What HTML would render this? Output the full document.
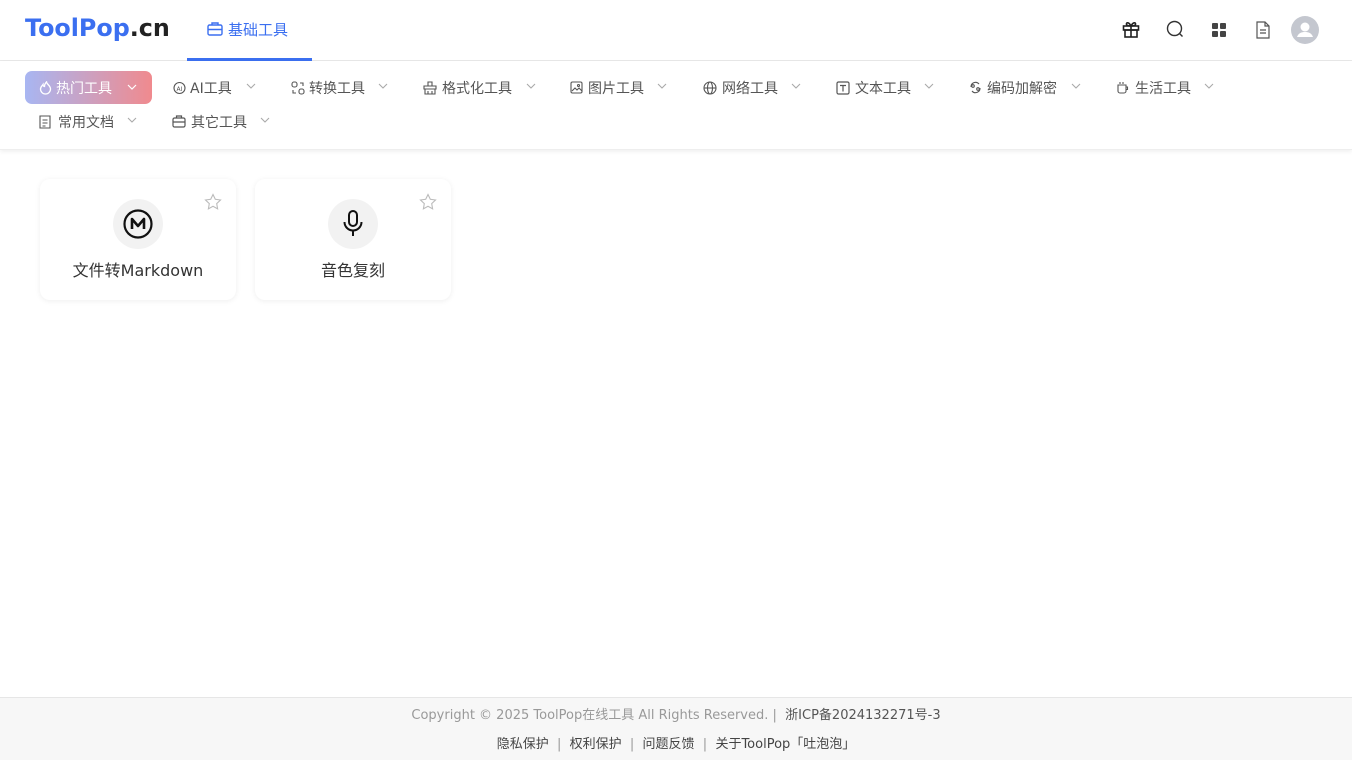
<!DOCTYPE html>
<html><head><meta charset="utf-8">
<style>
*{margin:0;padding:0;box-sizing:border-box}
body{width:1352px;height:760px;background:#fff;font-family:"DejaVu Sans","Liberation Sans","Noto Sans CJK SC",sans-serif;position:relative;overflow:hidden;color:#333}
.hdr{position:absolute;left:0;top:0;width:1352px;height:61px;border-bottom:1px solid #e8e8e8}
.logo{position:absolute;left:25px;top:14px;font-size:23.8px;font-weight:bold;color:#3b6ff0;letter-spacing:0}
.logo span{color:#222}
.tab{position:absolute;left:187px;top:0;width:125px;height:61px;border-bottom:3px solid #3b6ff0;color:#3b6ff0;font-size:15px}
.tab .t{position:absolute;left:41px;top:19px}
.tab svg{position:absolute;left:20px;top:22px}
.ri{position:absolute;top:20px}
.nav{position:absolute;left:0;top:61px;width:1352px;height:89px;box-shadow:0 2px 4px rgba(0,0,0,.06);border-bottom:1px solid #eee}
.it{position:absolute;font-size:14px;color:#555;white-space:nowrap}
.it svg.i{position:absolute;left:0;top:3px}
.it .t{position:absolute;top:0}
.chev{position:absolute;top:5px}
.hot{position:absolute;left:25px;top:10px;width:127px;height:33px;border-radius:7px;background:linear-gradient(90deg,#a8b6f2,#f08a8e);color:#fff;font-size:14px}
.card{position:absolute;top:179px;width:196px;height:121px;border-radius:10px;box-shadow:0 1px 6px rgba(0,0,0,.07);background:#fff}
.circ{position:absolute;left:73px;top:20px;width:50px;height:50px;border-radius:50%;background:#f2f2f2}
.card .nm{position:absolute;top:78px;width:100%;text-align:center;font-size:16px;color:#333}
.star{position:absolute;right:14px;top:14px}
.foot{position:absolute;left:0;top:697px;width:1352px;height:63px;background:#f7f7f7;border-top:1px solid #e6e6e6;font-size:13px;color:#999;text-align:center}
.foot .a{position:absolute;top:6px;width:100%}
.foot .b{position:absolute;top:35px;width:100%;color:#444}
</style></head><body>
<div class="hdr">
 <div class="logo">ToolPop<span>.cn</span></div>
 <div class="tab"><svg width="16" height="14" viewBox="0 0 16 14" fill="none" stroke="#3b6ff0" stroke-width="1.4"><rect x="1" y="3" width="14" height="10" rx="1.5"/><path d="M5 3V1h6v2M1 7.5h14"/></svg><span class="t">基础工具</span></div>
 <svg class="ri" style="left:1122px" width="18" height="18" viewBox="0 0 18 18" fill="none" stroke="#222" stroke-width="1.6"><rect x="1.5" y="6" width="15" height="4"/><rect x="3" y="10" width="12" height="7"/><path d="M9 6v11M9 6C7 2 4 2 4.5 4.5 5 6 9 6 9 6 9 6 13 6 13.5 4.5 14 2 11 2 9 6"/></svg>
 <svg class="ri" style="left:1166px" width="18" height="18" viewBox="0 0 18 18" fill="none" stroke="#333" stroke-width="1.4"><circle cx="8.5" cy="8.5" r="7"/><path d="M13.5 13.5l3 3"/></svg>
 <svg class="ri" style="left:1212px;top:23px" width="14" height="14" viewBox="0 0 14 14" fill="#444"><rect x="0" y="0" width="6" height="6" rx="1"/><rect x="8" y="0" width="6" height="6" rx="1"/><rect x="0" y="8" width="6" height="6" rx="1"/><rect x="8" y="8" width="6" height="6" rx="1"/></svg>
 <svg class="ri" style="left:1255px;top:21px" width="16" height="18" viewBox="0 0 16 18" fill="none" stroke="#555" stroke-width="1.2"><path d="M2 1h8l4 4v12H2z M10 1v4h4 M5 9h6 M5 12h6"/></svg>
 <svg class="ri" style="left:1291px;top:16px" width="28" height="28" viewBox="0 0 28 28"><circle cx="14" cy="14" r="14" fill="#c4c7cf"/><circle cx="14" cy="11" r="4.5" fill="#fff"/><path d="M6 21c1.5-4 4.5-5 8-5s6.5 1 8 5z" fill="#fff"/></svg>
</div>
<div class="nav">
 <div class="hot"><svg style="position:absolute;left:14px;top:10px" width="13" height="14" viewBox="0 0 13 14" fill="none" stroke="#fff" stroke-width="1.3"><path d="M6.5 13a5 5 0 0 1-5-5c0-2 1.5-3 2.5-4.5 0 1.5 1 2 1.5 2C5.5 3.5 6.5 2 7.5 1c0 2 4 3.5 4 7a5 5 0 0 1-5 5z"/></svg><span style="position:absolute;left:31px;top:7px">热门工具</span><svg style="position:absolute;left:102px;top:13px" width="10" height="7" viewBox="0 0 10 7" fill="none" stroke="#fff" stroke-width="1.2"><path d="M1 1l4 4 4-4"/></svg></div>

 <div class="it" style="left:173px;top:17px"><svg class="i" width="13" height="14" viewBox="0 0 13 14" fill="none" stroke="#555" stroke-width="1.1"><circle cx="6.5" cy="7" r="5.5"/><text x="3.5" y="10" font-size="6" fill="#555" stroke="none">AI</text></svg><span class="t" style="left:17px">AI工具</span><svg class="chev" style="left:73px" width="10" height="7" viewBox="0 0 10 7" fill="none" stroke="#aaa" stroke-width="1.1"><path d="M1 1l4 4 4-4"/></svg></div>
 <div class="it" style="left:291px;top:17px"><svg class="i" width="14" height="14" viewBox="0 0 14 14" fill="none" stroke="#555" stroke-width="1.1"><rect x="1" y="1" width="5" height="5" rx="2"/><rect x="8" y="8" width="5" height="5" rx="2"/><path d="M9 2h3v3M5 12H2V9"/></svg><span class="t" style="left:18px">转换工具</span><svg class="chev" style="left:87px" width="10" height="7" viewBox="0 0 10 7" fill="none" stroke="#aaa" stroke-width="1.1"><path d="M1 1l4 4 4-4"/></svg></div>
 <div class="it" style="left:423px;top:17px"><svg class="i" width="14" height="14" viewBox="0 0 14 14" fill="none" stroke="#555" stroke-width="1.1"><path d="M5 1h4v4H5zM1 5h12v3H1zM2 8v5h10V8M5 10v3M9 10v3"/></svg><span class="t" style="left:19px">格式化工具</span><svg class="chev" style="left:103px" width="10" height="7" viewBox="0 0 10 7" fill="none" stroke="#aaa" stroke-width="1.1"><path d="M1 1l4 4 4-4"/></svg></div>
 <div class="it" style="left:570px;top:17px"><svg class="i" width="13" height="13" viewBox="0 0 13 13" fill="none" stroke="#555" stroke-width="1.1"><rect x="1" y="1" width="11" height="11" rx="1.5"/><path d="M2 10l3-3 2 2 2-2 3 3"/><circle cx="8.5" cy="4.5" r="1"/></svg><span class="t" style="left:18px">图片工具</span><svg class="chev" style="left:87px" width="10" height="7" viewBox="0 0 10 7" fill="none" stroke="#aaa" stroke-width="1.1"><path d="M1 1l4 4 4-4"/></svg></div>
 <div class="it" style="left:703px;top:17px"><svg class="i" width="14" height="14" viewBox="0 0 14 14" fill="none" stroke="#555" stroke-width="1.1"><circle cx="7" cy="7" r="6"/><ellipse cx="7" cy="7" rx="2.5" ry="6"/><path d="M1 7h12"/></svg><span class="t" style="left:19px">网络工具</span><svg class="chev" style="left:88px" width="10" height="7" viewBox="0 0 10 7" fill="none" stroke="#aaa" stroke-width="1.1"><path d="M1 1l4 4 4-4"/></svg></div>
 <div class="it" style="left:836px;top:17px"><svg class="i" width="14" height="14" viewBox="0 0 14 14" fill="none" stroke="#555" stroke-width="1.2"><rect x="1" y="1" width="12" height="12" rx="1.5"/><path d="M4 4.5h6M7 4.5v6"/></svg><span class="t" style="left:19px">文本工具</span><svg class="chev" style="left:88px" width="10" height="7" viewBox="0 0 10 7" fill="none" stroke="#aaa" stroke-width="1.1"><path d="M1 1l4 4 4-4"/></svg></div>
 <div class="it" style="left:969px;top:17px"><svg class="i" width="13" height="13" viewBox="0 0 13 13" fill="none" stroke="#555" stroke-width="1.1"><path d="M2 6a4.5 4.5 0 0 1 8-3M11 7a4.5 4.5 0 0 1-8 3"/><circle cx="4" cy="5" r="1.3"/><circle cx="9" cy="8" r="1.3"/></svg><span class="t" style="left:18px">编码加解密</span><svg class="chev" style="left:102px" width="10" height="7" viewBox="0 0 10 7" fill="none" stroke="#aaa" stroke-width="1.1"><path d="M1 1l4 4 4-4"/></svg></div>
 <div class="it" style="left:1116px;top:17px"><svg class="i" width="13" height="13" viewBox="0 0 13 13" fill="none" stroke="#555" stroke-width="1.1"><path d="M2 4h8v6a2 2 0 0 1-2 2H4a2 2 0 0 1-2-2zM10 6h1.5v2.5H10M4 1v2M7 1v2"/></svg><span class="t" style="left:19px">生活工具</span><svg class="chev" style="left:88px" width="10" height="7" viewBox="0 0 10 7" fill="none" stroke="#aaa" stroke-width="1.1"><path d="M1 1l4 4 4-4"/></svg></div>

 <div class="it" style="left:39px;top:51px"><svg class="i" width="12" height="14" viewBox="0 0 12 14" fill="none" stroke="#555" stroke-width="1.1"><path d="M1 1h10v12H1zM3.5 5h5M3.5 8h5M3.5 11h3"/></svg><span class="t" style="left:19px">常用文档</span><svg class="chev" style="left:88px" width="10" height="7" viewBox="0 0 10 7" fill="none" stroke="#aaa" stroke-width="1.1"><path d="M1 1l4 4 4-4"/></svg></div>
 <div class="it" style="left:172px;top:51px"><svg class="i" width="14" height="13" viewBox="0 0 14 13" fill="none" stroke="#555" stroke-width="1.2"><rect x="1" y="3" width="12" height="9" rx="1.5"/><path d="M4.5 3V1h5v2M1 7h12"/></svg><span class="t" style="left:19px">其它工具</span><svg class="chev" style="left:88px" width="10" height="7" viewBox="0 0 10 7" fill="none" stroke="#aaa" stroke-width="1.1"><path d="M1 1l4 4 4-4"/></svg></div>
</div>

<div class="card" style="left:40px">
 <div class="circ"><svg style="position:absolute;left:10px;top:10px" width="30" height="30" viewBox="0 0 30 30" fill="none" stroke="#111" stroke-width="2.2"><circle cx="15" cy="15" r="13.5"/><path d="M9 20V10l6 7 6-7v10" stroke-width="2.6" stroke-linejoin="round"/></svg></div>
 <svg class="star" width="18" height="18" viewBox="0 0 18 18" fill="none" stroke="#bbb" stroke-width="1.1"><path d="M9 1.5l2.3 4.8 5.2.7-3.8 3.6.9 5.2L9 13.3l-4.6 2.5.9-5.2L1.5 7l5.2-.7z"/></svg>
 <div class="nm">文件转Markdown</div>
</div>
<div class="card" style="left:255px">
 <div class="circ"><svg style="position:absolute;left:14px;top:11px" width="22" height="28" viewBox="0 0 22 28" fill="none" stroke="#111" stroke-width="2"><rect x="7" y="1" width="8" height="15" rx="4"/><path d="M2.5 12a8.5 8.5 0 0 0 17 0M11 20.5V26"/></svg></div>
 <svg class="star" width="18" height="18" viewBox="0 0 18 18" fill="none" stroke="#bbb" stroke-width="1.1"><path d="M9 1.5l2.3 4.8 5.2.7-3.8 3.6.9 5.2L9 13.3l-4.6 2.5.9-5.2L1.5 7l5.2-.7z"/></svg>
 <div class="nm">音色复刻</div>
</div>

<div class="foot">
 <div class="a">Copyright © 2025 ToolPop在线工具 All Rights Reserved. |&nbsp; <span style="color:#555">浙ICP备2024132271号-3</span></div>
 <div class="b">隐私保护 &nbsp;<span style="color:#999">|</span>&nbsp; 权利保护 &nbsp;<span style="color:#999">|</span>&nbsp; 问题反馈 &nbsp;<span style="color:#999">|</span>&nbsp; 关于ToolPop「吐泡泡」</div>
</div>
</body></html>
